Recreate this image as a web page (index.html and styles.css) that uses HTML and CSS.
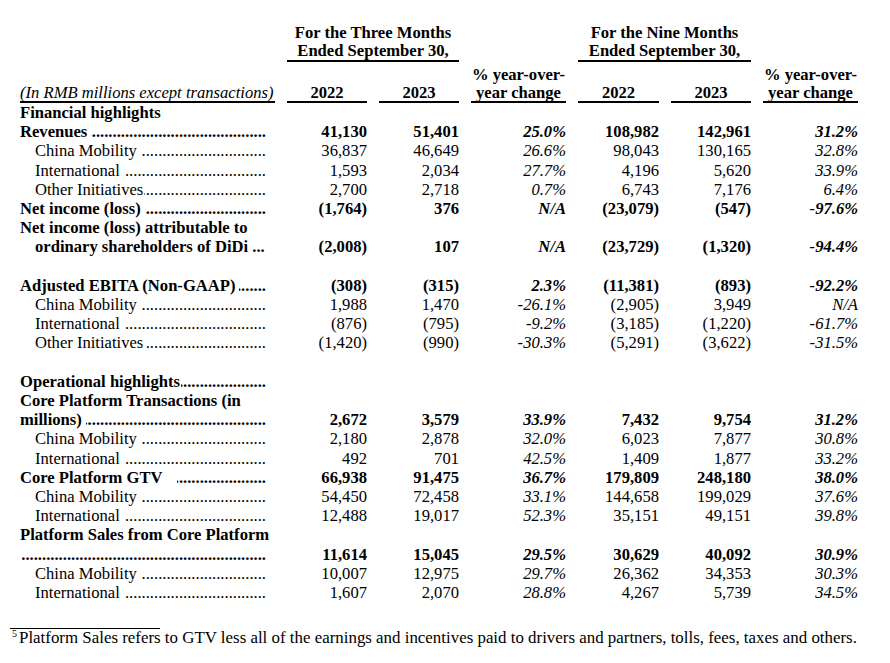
FILE: index.html
```html
<!DOCTYPE html>
<html lang="en">
<head>
<meta charset="utf-8">
<title>DiDi highlights</title>
<link rel="stylesheet" href="styles.css">
</head>
<body>
<div class="sheet">
  <div class="tbl">
    <!-- header row 1 -->
    <div class="c-lbl"></div>
    <div class="h1 span2">For the Three Months<br>Ended September 30,</div>
    <div></div>
    <div class="h1 span2">For the Nine Months<br>Ended September 30,</div>
    <div></div>

    <!-- header row 2 -->
    <div class="h2 h2l"><span class="units">(In RMB millions except transactions)</span></div>
    <div class="h2 hc">2022</div>
    <div class="h2 hc">2023</div>
    <div class="h2 hc">% year-over-<br>year change</div>
    <div class="h2 hc">2022</div>
    <div class="h2 hc">2023</div>
    <div class="h2 hc">% year-over-<br>year change</div>

    <div class="c-lbl b full">Financial highlights</div>

    <div class="c-lbl b"><div class="ld"><span>Revenues</span><span class="dots"></span></div></div>
    <div class="n b">41,130</div><div class="n b">51,401</div><div class="p b">25.0%</div><div class="n b">108,982</div><div class="n b">142,961</div><div class="p b">31.2%</div>

    <div class="c-lbl sub"><div class="ld"><span>China Mobility</span><span class="dots"></span></div></div>
    <div class="n">36,837</div><div class="n">46,649</div><div class="p">26.6%</div><div class="n">98,043</div><div class="n">130,165</div><div class="p">32.8%</div>

    <div class="c-lbl sub"><div class="ld"><span>International</span><span class="dots"></span></div></div>
    <div class="n">1,593</div><div class="n">2,034</div><div class="p">27.7%</div><div class="n">4,196</div><div class="n">5,620</div><div class="p">33.9%</div>

    <div class="c-lbl sub"><div class="ld"><span>Other Initiatives</span><span class="dots tight"></span></div></div>
    <div class="n">2,700</div><div class="n">2,718</div><div class="p">0.7%</div><div class="n">6,743</div><div class="n">7,176</div><div class="p">6.4%</div>

    <div class="c-lbl b"><div class="ld"><span>Net income (loss)</span><span class="dots"></span></div></div>
    <div class="n b">(1,764)</div><div class="n b">376</div><div class="p b">N/A</div><div class="n b">(23,079)</div><div class="n b">(547)</div><div class="p b">-97.6%</div>

    <div class="c-lbl b"><div>Net income (loss) attributable to</div><div class="ind">ordinary shareholders of DiDi ...</div></div>
    <div class="n b">(2,008)</div><div class="n b">107</div><div class="p b">N/A</div><div class="n b">(23,729)</div><div class="n b">(1,320)</div><div class="p b">-94.4%</div>

    <div class="blank full"></div>

    <div class="c-lbl b"><div class="ld"><span>Adjusted EBITA (Non-GAAP)</span><span class="dots"></span></div></div>
    <div class="n b">(308)</div><div class="n b">(315)</div><div class="p b">2.3%</div><div class="n b">(11,381)</div><div class="n b">(893)</div><div class="p b">-92.2%</div>

    <div class="c-lbl sub"><div class="ld"><span>China Mobility</span><span class="dots"></span></div></div>
    <div class="n">1,988</div><div class="n">1,470</div><div class="p">-26.1%</div><div class="n">(2,905)</div><div class="n">3,949</div><div class="p">N/A</div>

    <div class="c-lbl sub"><div class="ld"><span>International</span><span class="dots"></span></div></div>
    <div class="n">(876)</div><div class="n">(795)</div><div class="p">-9.2%</div><div class="n">(3,185)</div><div class="n">(1,220)</div><div class="p">-61.7%</div>

    <div class="c-lbl sub"><div class="ld"><span>Other Initiatives</span><span class="dots"></span></div></div>
    <div class="n">(1,420)</div><div class="n">(990)</div><div class="p">-30.3%</div><div class="n">(5,291)</div><div class="n">(3,622)</div><div class="p">-31.5%</div>

    <div class="blank full"></div>

    <div class="c-lbl b full"><div class="ld ld-op"><span>Operational highlights</span><span class="dots tight"></span></div></div>

    <div class="c-lbl b"><div>Core Platform Transactions (in</div><div class="ld"><span>millions)</span><span class="dots"></span></div></div>
    <div class="n b">2,672</div><div class="n b">3,579</div><div class="p b">33.9%</div><div class="n b">7,432</div><div class="n b">9,754</div><div class="p b">31.2%</div>

    <div class="c-lbl sub"><div class="ld"><span>China Mobility</span><span class="dots"></span></div></div>
    <div class="n">2,180</div><div class="n">2,878</div><div class="p">32.0%</div><div class="n">6,023</div><div class="n">7,877</div><div class="p">30.8%</div>

    <div class="c-lbl sub"><div class="ld"><span>International</span><span class="dots"></span></div></div>
    <div class="n">492</div><div class="n">701</div><div class="p">42.5%</div><div class="n">1,409</div><div class="n">1,877</div><div class="p">33.2%</div>

    <div class="c-lbl b"><div class="ld"><span>Core Platform GTV</span><span class="dots wide"></span></div></div>
    <div class="n b">66,938</div><div class="n b">91,475</div><div class="p b">36.7%</div><div class="n b">179,809</div><div class="n b">248,180</div><div class="p b">38.0%</div>

    <div class="c-lbl sub"><div class="ld"><span>China Mobility</span><span class="dots"></span></div></div>
    <div class="n">54,450</div><div class="n">72,458</div><div class="p">33.1%</div><div class="n">144,658</div><div class="n">199,029</div><div class="p">37.6%</div>

    <div class="c-lbl sub"><div class="ld"><span>International</span><span class="dots"></span></div></div>
    <div class="n">12,488</div><div class="n">19,017</div><div class="p">52.3%</div><div class="n">35,151</div><div class="n">49,151</div><div class="p">39.8%</div>

    <div class="c-lbl b"><div class="nowrap">Platform Sales from Core Platform</div><div class="ld"><span class="dots solo"></span></div></div>
    <div class="n b">11,614</div><div class="n b">15,045</div><div class="p b">29.5%</div><div class="n b">30,629</div><div class="n b">40,092</div><div class="p b">30.9%</div>

    <div class="c-lbl sub"><div class="ld"><span>China Mobility</span><span class="dots"></span></div></div>
    <div class="n">10,007</div><div class="n">12,975</div><div class="p">29.7%</div><div class="n">26,362</div><div class="n">34,353</div><div class="p">30.3%</div>

    <div class="c-lbl sub"><div class="ld"><span>International</span><span class="dots"></span></div></div>
    <div class="n">1,607</div><div class="n">2,070</div><div class="p">28.8%</div><div class="n">4,267</div><div class="n">5,739</div><div class="p">34.5%</div>
  </div>

  <div class="footnote">
    <div class="fn-rule"></div>
    <p class="fn-text"><sup>5</sup>Platform Sales refers to GTV less all of the earnings and incentives paid to drivers and partners, tolls, fees, taxes and others.</p>
  </div>
</div>
</body>
</html>
```

FILE: styles.css
```css
html, body {
  margin: 0;
  padding: 0;
  background: #ffffff;
}

body {
  font-family: "Liberation Serif", "Times New Roman", serif;
  font-size: 16.6px;
  color: #000000;
}

.sheet {
  width: 890px;
  height: 663px;
  padding-top: 24px;
  box-sizing: border-box;
  overflow: hidden;
}

.tbl {
  display: grid;
  grid-template-columns: 255px 80px 80px 95px 81px 80px 95px;
  column-gap: 12px;
  align-items: end;
  margin-left: 20px;
  line-height: 19.2px;
}

.span2 {
  grid-column: span 2;
}

.full {
  grid-column: 1 / -1;
}

.ld-op {
  width: 246px;
}

.h1 {
  font-weight: bold;
  text-align: center;
  line-height: 17.5px;
  padding-bottom: 1px;
  border-bottom: 2px solid #000;
  white-space: nowrap;
}

.h2 {
  margin-top: 4px;
  line-height: 17.5px;
  border-bottom: 2px solid #000;
}

.hc {
  font-weight: bold;
  text-align: center;
  white-space: nowrap;
}

.h2l {
  font-style: italic;
  white-space: nowrap;
}

.b {
  font-weight: bold;
}

.c-lbl {
  padding-right: 9px;
}

.sub {
  padding-left: 15px;
}

.ind {
  padding-left: 15px;
}

.nowrap {
  white-space: nowrap;
}

.ld {
  display: flex;
  align-items: baseline;
  white-space: nowrap;
}

.dots {
  flex: 1;
  overflow: hidden;
  direction: rtl;
  white-space: nowrap;
  margin-left: 4px;
  min-width: 0;
}

.dots::before {
  content: "................................................................................................";
}

.dots.tight {
  margin-left: 1px;
}

.dots.wide {
  margin-left: 14px;
}

.dots.solo {
  margin-left: 2px;
}

.n {
  text-align: right;
  white-space: nowrap;
}

.p {
  text-align: right;
  font-style: italic;
  white-space: nowrap;
}

.blank {
  height: 19.2px;
}

.footnote {
  margin-top: 26px;
  padding-left: 10px;
}

.fn-rule {
  width: 150px;
  height: 0;
  border-top: 1px solid #000;
}

.fn-text {
  margin: -1px 0 0 2px;
  font-size: 16.9px;
  line-height: 19px;
  white-space: nowrap;
}

.fn-text sup {
  font-size: 10px;
  line-height: 0;
  vertical-align: 6px;
  margin-right: 2px;
}
```
